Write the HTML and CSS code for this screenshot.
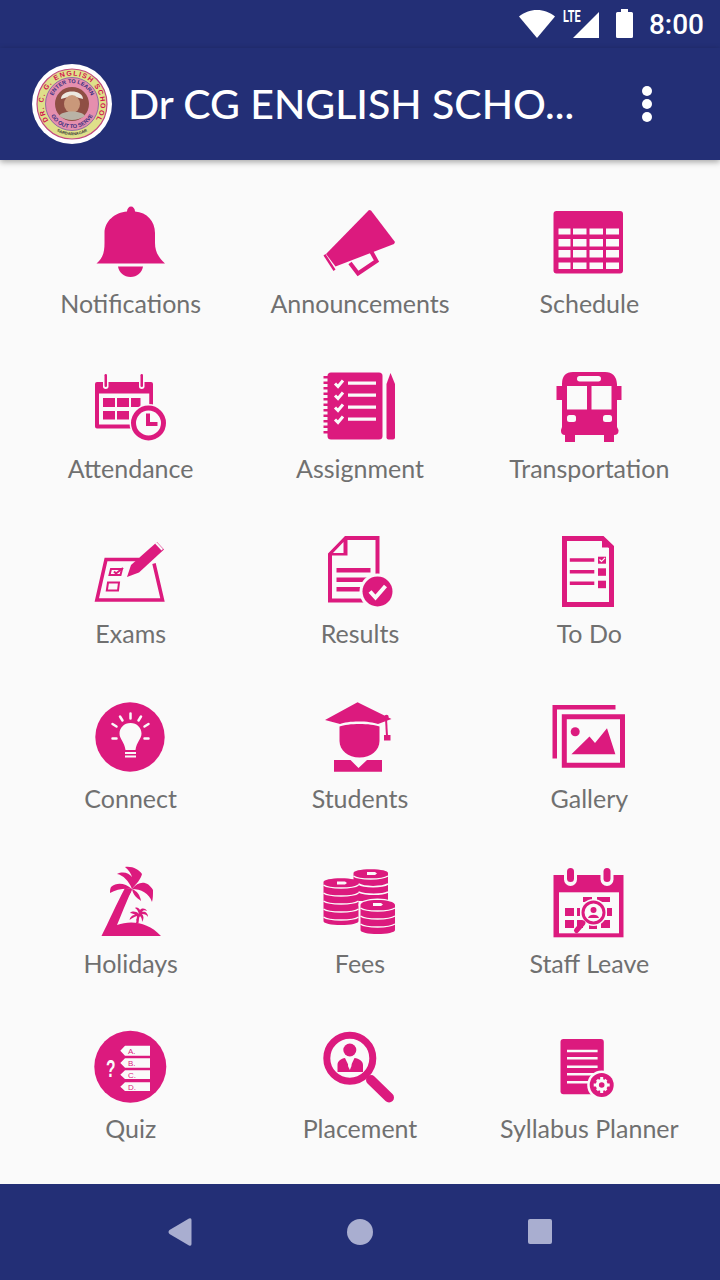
FILE: index.html
```html
<!DOCTYPE html>
<html>
	<head>
		<meta charset="UTF-8">
		<title>Dr CG ENGLISH SCHOOL</title>
		<link rel="stylesheet" href="styles.css">
	</head>
	<body>
		<div class="phone">

			<div class="status">
				<svg class="st-wifi" width="36" height="28" viewBox="0 0 36 28"><path d="M0 6.500C5 2.500 11 0 18 0S31 2.500 36 6.500L18 28Z"/></svg>
				<div class="st-net">
					<span class="st-lte">LTE</span>
					<svg width="26" height="26" viewBox="0 0 26 26"><path d="M26 0V26H0Z"/></svg>
				</div>
				<svg class="st-batt" width="17" height="29" viewBox="0 0 17 29"><path d="M5 0H12V3H15.500Q17 3 17 4.500V27.500Q17 29 15.500 29H1.500Q0 29 0 27.500V4.500Q0 3 1.500 3H5Z"/></svg>
				<span class="st-time">8:00</span>
			</div>

			<div class="toolbar">
				<svg class="logo" width="80" height="80" viewBox="0 0 80 80">
					<defs>
						<path id="arc-top" d="M15.300 54.300A28.500 28.500 0 1 1 64.700 54.300"/>
						<path id="arc-in" d="M20 44A20.500 20.500 0 1 1 60 44"/>
						<path id="arc-low" d="M17 47A24 24 0 0 0 63 47"/>
						<path id="arc-bot" d="M18 62A31 31 0 0 0 62 62"/>
					</defs>
					<circle cx="40" cy="40" r="40" fill="#fff"/>
					<circle cx="40" cy="40" r="35" fill="#dfe08a"/>
					<circle cx="40" cy="40" r="35" fill="none" stroke="#c2497f" stroke-width="1.200"/>
					<circle cx="40" cy="40" r="26.500" fill="#e58fae"/>
					<circle cx="40" cy="40" r="26.500" fill="none" stroke="#7a5aa0" stroke-width="0.800"/>
					<circle cx="40" cy="40" r="17" fill="#8f4f44"/>
					<path d="M29 35C29 25 51 25 51 35Q40 31 29 35Z" fill="#ece8e0"/>
					<ellipse cx="40" cy="40" rx="8" ry="9" fill="#c9987a"/>
					<path d="M27 52C30 46 50 46 53 52Q40 60 27 52Z" fill="#b9b3a6"/>
					<text class="logo-big"><textPath href="#arc-top" startOffset="50%" text-anchor="middle">DR. C. G. ENGLISH SCHOOL</textPath></text>
					<text class="logo-mid"><textPath href="#arc-in" startOffset="50%" text-anchor="middle">ENTER TO LEARN</textPath></text>
					<text class="logo-mid"><textPath href="#arc-low" startOffset="50%" text-anchor="middle">GO OUT TO SERVE</textPath></text>
					<text class="logo-sm"><textPath href="#arc-bot" startOffset="50%" text-anchor="middle">SARDARNAGAR</textPath></text>
				</svg>
				<h1 class="title">Dr CG ENGLISH SCHO...</h1>
				<div class="more"><i></i><i></i><i></i></div>
			</div>

			<div class="grid">

				<div class="item">
					<svg class="icon" viewBox="0 0 72 72">
						<path d="M1.500 58.500C8 53 9.500 47 9.500 38V28C9.500 16 20 7.500 32 6.500C32 3.500 34 1.500 36 1.500S40 3.500 40 6.500C52 7.500 60 16 60 28V38C60 47 64 53 70 58.500Z"/>
						<path d="M23 61.500H48C47 67.500 42 72 35.500 72S24 67.500 23 61.500Z"/>
					</svg>
					<p>Notifications</p>
				</div>
				<div class="item">
					<svg class="icon" viewBox="0 0 72 72">
						<path d="M45 5L47 5.500L71 37L70 39L11.500 61.500L2 49Z"/>
						<path d="M-0.500 50.500L1.500 49L11.500 64.500L9.500 66Z"/>
						<path class="line" d="M26 58L34 68.500L52.500 56L47.500 47"/>
					</svg>
					<p>Announcements</p>
				</div>
				<div class="item">
					<svg class="icon" viewBox="0 0 72 72">
						<rect x="0.500" y="6" width="69.500" height="62.500" rx="3"/>
						<path class="cut" d="M5.500 23.500H17.500V29.500H5.500ZM20 23.500H33.500V29.500H20ZM36.500 23.500H50V29.500H36.500ZM53 23.500H66V29.500H53ZM5.500 34H17.500V41.500H5.500ZM20 34H33.500V41.500H20ZM36.500 34H50V41.500H36.500ZM53 34H66V41.500H53ZM5.500 45H17.500V52.500H5.500ZM20 45H33.500V52.500H20ZM36.500 45H50V52.500H36.500ZM53 45H66V52.500H53ZM5.500 57.500H17.500V64H5.500ZM20 57.500H33.500V64H20ZM36.500 57.500H50V64H36.500ZM53 57.500H66V64H53Z"/>
					</svg>
					<p>Schedule</p>
				</div>

				<div class="item">
					<svg class="icon" viewBox="0 0 72 72">
						<path d="M2 12H56Q58 12 58 14V40H40V52H38V58.500H2Q0 58.500 0 56.500V14Q0 12 2 12Z"/>
						<path class="cut" d="M4 23.500H54.500V54.500H4Z"/>
						<path d="M54.500 23H58V40H54.500Z"/>
						<path d="M8 28H20V37H8ZM22 28H34V37H22ZM36 28H45.500V37H36ZM8 41H20V49.500H8ZM22 41H34V49.500H22Z"/>
						<rect class="cut" x="8" y="3" width="5.500" height="16" rx="2.700"/>
						<rect class="cut" x="44" y="3" width="5.500" height="16" rx="2.700"/>
						<rect x="9.500" y="4" width="2.500" height="13" rx="1.200"/>
						<rect x="45.500" y="4" width="2.500" height="13" rx="1.200"/>
						<circle class="cut" cx="53.500" cy="53" r="19"/>
						<circle class="line thick" cx="53.500" cy="53" r="15"/>
						<path class="line" d="M53 43.500V54H62.500"/>
					</svg>
					<p>Attendance</p>
				</div>
				<div class="item">
					<svg class="icon" viewBox="0 0 72 72">
						<rect x="3.500" y="2.500" width="55" height="67" rx="3.500"/>
						<path d="M-0.500 6H5V8.500H-0.500ZM-0.500 11.500H5V14H-0.500ZM-0.500 17H5V19.500H-0.500ZM-0.500 22.500H5V25H-0.500ZM-0.500 28H5V30.500H-0.500ZM-0.500 33.500H5V36H-0.500ZM-0.500 39H5V41.500H-0.500ZM-0.500 44.500H5V47H-0.500ZM-0.500 50H5V52.500H-0.500ZM-0.500 55.500H5V58H-0.500ZM-0.500 61H5V63.500H-0.500Z"/>
						<path class="tick" d="M11 13.500L14 16.500L19 10.500M11 25.500L14 28.500L19 22.500M11 37.500L14 40.500L19 34.500M11 49.500L14 52.500L19 46.500"/>
						<path class="cut" d="M24 11.500H52V14.800H24ZM24 23.500H52V26.800H24ZM24 35.500H52V38.800H24ZM24 47.500H52V50.800H24Z"/>
						<path d="M62.500 14L66.500 3L71 14V67.500Q71 69.500 69 69.500H64.500Q62.500 69.500 62.500 67.500Z"/>
					</svg>
					<p>Assignment</p>
				</div>
				<div class="item">
					<svg class="icon" viewBox="0 0 72 72">
						<path d="M20 2H52Q63 2 64 14V16H68.500V30H64V57L65.500 60V61Q65.500 65 61 65V72H51V65H22V72H12V65Q8 65 8 61V60L9 57V30H3.500V16H9V14Q9 2 20 2Z"/>
						<path class="cut" d="M14 16H34V39.500H14ZM38.500 16H58.500V39.500H38.500Z"/>
						<rect class="cut" x="24" y="6" width="24" height="5.500" rx="2.700"/>
						<rect class="cut" x="14" y="45" width="9" height="7" rx="2.500"/>
						<rect class="cut" x="50" y="45" width="9" height="7" rx="2.500"/>
					</svg>
					<p>Transportation</p>
				</div>

				<div class="item">
					<svg class="icon" viewBox="0 0 72 72">
						<path class="line thin" d="M44 24.500H11L1.800 65H67.500L59 28.500"/>
						<path d="M32 42L36 30L62 7L69 14.500L44 37.500Z"/>
						<path class="cut" d="M60 8.500L61.500 7L68 14L66.500 15.500Z"/>
						<path class="line hair" d="M16 34H27L25.500 40H14.500Z"/>
						<path class="line hair" d="M19 36.500L21 38.500L28 33"/>
						<path class="line hair" d="M13 47.500H24L23 55.500H11.800Z"/>
					</svg>
					<p>Exams</p>
				</div>
				<div class="item">
					<svg class="icon" viewBox="0 0 72 72">
						<path class="line" d="M21 3H53.500V60M43 65.500H6V20"/>
						<path d="M21 1H23.500V20.500H4V18.500ZM19.500 7L9 18H19.500Z"/>
						<path d="M12.500 33H46.500V37.500H12.500ZM12.500 42.500H46.500V47H12.500ZM12.500 52H42V56.500H12.500Z"/>
						<circle class="cut" cx="53.500" cy="56.500" r="18"/>
						<circle cx="53.500" cy="56.500" r="15"/>
						<path class="tick wide" d="M46 56.500L51.500 62.500L61.500 51"/>
					</svg>
					<p>Results</p>
				</div>
				<div class="item">
					<svg class="icon" viewBox="0 0 72 72">
						<path class="line thick" d="M11.500 3.500H49.500L58.500 12V69.500H11.500Z"/>
						<path d="M49 1L61 12.500H49Z"/>
						<path d="M16.800 23.300H41.300V26.700H16.800ZM16.800 35H41.300V38.400H16.800ZM16.800 46.600H41.300V50H16.800Z"/>
						<rect x="45" y="21.700" width="8" height="7"/>
						<rect x="45" y="33.300" width="8" height="7.500"/>
						<rect x="45" y="45.700" width="8" height="7.500"/>
						<path class="tick fine" d="M46.500 24.500L48.500 26.500L52 22.800"/>
					</svg>
					<p>To Do</p>
				</div>

				<div class="item">
					<svg class="icon" viewBox="0 0 72 72">
						<circle cx="35" cy="37" r="34.700"/>
						<path class="cut" d="M35.500 23C29 23 24.500 28 24.500 33.500C24.500 39 29.500 42 30.500 50H40.500C41.500 42 46.500 39 46.500 33.500C46.500 28 42 23 35.500 23Z"/>
						<path class="cut" d="M30 52H41V54H30ZM30 55.500H41V57.500H30Z"/>
						<path class="ray" d="M35.500 13.500V18.500M25 16.500L27.500 20.500M46 16.500L43.500 20.500M17.500 24L21.500 26.500M53.500 24L49.500 26.500M17.500 38.500H21.500M53.500 38.500H49.500"/>
					</svg>
					<p>Connect</p>
				</div>
				<div class="item">
					<svg class="icon" viewBox="0 0 72 72">
						<path d="M33.500 2.300L67.500 19L54 24C46 20.500 23 20.500 16 24L1 20Z"/>
						<path d="M15.500 26.500C24 23 47 23 55.500 26.500V41C55.500 50 47 57.500 35.500 57.500S15.500 50 15.500 41Z"/>
						<path d="M10 60H26.500L34.500 68L43 60H58V71.700H10Z"/>
						<path class="line hair" d="M62 19L63 36"/>
						<circle cx="62.500" cy="17" r="2.200"/>
						<rect x="60" y="35" width="6.500" height="5.500"/>
					</svg>
					<p>Students</p>
				</div>
				<div class="item">
					<svg class="icon" viewBox="0 0 72 72">
						<path d="M-0.500 5H62.500V9.500H4V58.500H-0.500Z"/>
						<path class="line thick" d="M11.300 16.800H69.500V65.200H11.300Z"/>
						<circle cx="22.200" cy="31.700" r="4.500"/>
						<path d="M18.400 54.300L36.500 36.500L42 43L54 28.300L62.400 54.300Z"/>
					</svg>
					<p>Gallery</p>
				</div>

				<div class="item">
					<svg class="icon" viewBox="0 0 72 72">
						<path d="M6.500 71C13 58 22 38 30 23L37 24C31 38 26 50 22 60C36 55 53 57 66 71Z"/>
						<path d="M37 24C42 18 46 14 47 9C44 5 38 1 30 2C34 5 36 9 37 12C34 8 28 6 22 9C28 10 34 16 37 24Z"/>
						<path d="M37 24C30 18 22 17 16 22C15 24 15 26 15 28C21 24 30 23 37 24Z"/>
						<path d="M37 24C44 15 53 16 58 25C58 30 58 33 57 37C54 28 46 24 37 24Z"/>
						<path d="M37 24C42 26 45 30 46 36C42 33 38 30 37 24Z"/>
						<path d="M37 24C33 26 30 29 29 34C33 32 36 29 37 24Z"/>
						<path d="M41 58L43 50H44.500L43.500 58Z"/>
						<path d="M44 49C41 46 37 46 35 48C37 48 39 49 40 50C37 50 35 52 34.500 55C37 53 39 52 42 51C42 53 41 55 41 56C43 54 44 53 45 51C47 53 47 55 47 57C49 54 49 51 47 49C50 49 52 50 53 52C53 48 50 46 47 47C48 45 50 45 52 46C50 43 47 43 45 45C44 43 42 42 40 43C42 44 43 46 44 49Z"/>
					</svg>
					<p>Holidays</p>
				</div>
				<div class="item">
					<svg class="icon" viewBox="0 0 72 72">
						<path d="M29.500 8C29.500 6 36 4.300 46.700 4.300S64 6 64 8V36H29.500Z"/>
						<path d="M-0.500 17C-0.500 15 7 13.300 17 13.300S34.500 15 34.500 17V56C34.500 58.500 27 60 17 60S-0.500 58.500 -0.500 56Z"/>
						<ellipse class="cut" cx="53.500" cy="40" rx="19" ry="6.500"/>
						<path d="M36.500 40C36.500 37 44 35 53.500 35S71 37 71 40V65C71 67.500 63 69 53.500 69S36.500 67.500 36.500 65Z"/>
						<path class="seam" d="M29.500 11C35 15 58 15 64 11M34.500 19C40 22.500 58 22.500 64 19M34.500 27C42 30 58 30 64 27M-0.500 20C5 24 29 24 34.500 20M-0.500 28C5 32 29 32 34.500 28M-0.500 36C5 40 29 40 34.500 36M-0.500 44C5 48 29 48 34.500 44M-0.500 52C5 56 29 56 34.500 52M36.500 43C42 47 65 47 71 43M36.500 51C42 55 65 55 71 51M36.500 59C42 63 65 63 71 59"/>
						<path class="cut" d="M13 16.500H21L23 18L21 19.500H13ZM43 7H51L53 8.500L51 10H43ZM49 38H57L59 39.500L57 41H49Z"/>
					</svg>
					<p>Fees</p>
				</div>
				<div class="item">
					<svg class="icon" viewBox="0 0 72 72">
						<rect x="0.500" y="10" width="70" height="62.300"/>
						<rect class="cut" x="6" y="27.300" width="60" height="41"/>
						<rect class="cut" x="11" y="1" width="13" height="20" rx="6.500"/>
						<rect class="cut" x="47.500" y="1" width="13" height="20" rx="6.500"/>
						<rect x="14" y="3" width="7" height="14" rx="3.500"/>
						<rect x="50.500" y="3" width="7" height="14" rx="3.500"/>
						<path d="M12 43H21V51H12ZM12 55H21V63H12ZM24 43H27V51H24ZM24 55H30V63H24ZM30 32H39V37H30ZM44 32H57V37H44ZM54 43H59V51H54ZM48 55H57V63H48ZM36 60H44V64H36Z"/>
						<circle class="cut" cx="40.500" cy="47.500" r="13.500"/>
						<circle class="line" cx="40.500" cy="47.500" r="10.500" style="stroke-width:3"/>
						<circle cx="40.500" cy="45" r="3"/>
						<path d="M35 53C35.500 48.500 45.500 48.500 46 53Z"/>
						<path class="cap slim" d="M30 58L23.500 65.500"/>
					</svg>
					<p>Staff Leave</p>
				</div>

				<div class="item">
					<svg class="icon" viewBox="0 0 72 72">
						<circle cx="35.300" cy="36.800" r="36"/>
						<path class="cut" d="M30 15.700H55V25.700H30L25.300 20.700ZM30 28.300H55V37.700H30L25.300 33ZM30 40.300H55V49H30L25.300 44.700ZM30 52.300H55V61H30L25.300 56.700Z"/>
						<text class="q-mark" x="11" y="47" textLength="9.500" lengthAdjust="spacingAndGlyphs">?</text>
						<text class="q-opt" x="33" y="24">A.</text>
						<text class="q-opt" x="33" y="36">B.</text>
						<text class="q-opt" x="33" y="48">C.</text>
						<text class="q-opt" x="33" y="60">D.</text>
					</svg>
					<p>Quiz</p>
				</div>
				<div class="item">
					<svg class="icon" viewBox="0 0 72 72">
						<circle class="line ring" cx="25.800" cy="28.300" r="23"/>
						<path class="cap" d="M47 50L65 67.500"/>
						<circle cx="25.800" cy="20" r="6.500"/>
						<path d="M13.500 42V35C13.500 31 17 28.500 21 28L25.800 38L30.500 28C35 28.500 39 31 39 35V42Z"/>
						<path class="cut" d="M24.800 28H26.800L27.500 36L25.800 40L24 36Z"/>
					</svg>
					<p>Placement</p>
				</div>
				<div class="item">
					<svg class="icon" viewBox="0 0 72 72">
						<rect x="7.500" y="9" width="43.300" height="55.300" rx="3"/>
						<path class="cut" d="M14 19.800H44.600V22.200H14ZM14 27.100H44.600V29.500H14ZM14 35.500H44.600V37.900H14ZM14 43.100H44.600V45.500H14ZM14 51.100H36V53.500H14Z"/>
						<circle class="cut" cx="48.700" cy="55" r="14.500"/>
						<circle cx="48.700" cy="55" r="12"/>
						<circle class="cut" cx="48.700" cy="55" r="6"/>
						<path class="cut" d="M47.200 47H50.200V63H47.200ZM40.700 53.500H56.700V56.500H40.700ZM43 50.800L45 48.800L54.400 59.200L52.400 61.200ZM52.400 48.800L54.400 50.800L45 61.200L43 59.200Z"/>
						<circle cx="48.700" cy="55" r="2.800"/>
					</svg>
					<p>Syllabus Planner</p>
				</div>

			</div>

			<div class="navbar">
				<svg width="24" height="28" viewBox="0 0 24 28"><path d="M21 0.500Q23.500 -0.500 23.500 2V26Q23.500 28.500 21 27.500L1.500 16Q-0.500 14 1.500 12Z"/></svg>
				<svg width="26" height="26" viewBox="0 0 26 26"><circle cx="13" cy="13" r="13"/></svg>
				<svg width="24" height="25" viewBox="0 0 24 25"><rect width="24" height="25" rx="2"/></svg>
			</div>

		</div>
	</body>
</html>
```

FILE: styles.css
```css
*{
	box-sizing: border-box;
}
body{
	margin: 0;
	background-color: #fafafa;
	font-family: "Lato", "Noto Sans", sans-serif;
}
.phone{
	width: 720px;
	height: 1280px;
	display: flex;
	flex-direction: column;
	overflow: hidden;
}

/* status bar */
.status{
	height: 48px;
	background-color: #232f76;
	display: flex;
	align-items: flex-start;
	justify-content: flex-end;
	padding-right: 16px;
	fill: #fff;
	color: #fff;
}
.st-wifi{
	margin-top: 10px;
	margin-right: 8px;
}
.st-net{
	width: 36px;
	height: 38px;
	display: flex;
	align-items: flex-end;
	justify-content: flex-end;
	position: relative;
}
.st-lte{
	position: absolute;
	left: 0;
	top: 9px;
	font-family: "Roboto", sans-serif;
	font-size: 16px;
	font-weight: 700;
	line-height: 16px;
	transform: scaleX(0.68);
	transform-origin: left top;
}
.st-batt{
	margin-top: 9px;
	margin-left: 17px;
}
.st-time{
	margin-top: 8px;
	margin-left: 16px;
	font-family: "Roboto", sans-serif;
	font-size: 28px;
	font-weight: 500;
	line-height: 34px;
}

/* toolbar */
.toolbar{
	height: 112px;
	background-color: #232f76;
	display: flex;
	align-items: center;
	padding-left: 32px;
	box-shadow: 0 2px 6px rgba(0,0,0,0.35);
	position: relative;
}
.logo{
	flex: none;
}
.logo text{
	font-family: "Liberation Sans", sans-serif;
	font-weight: 700;
}
.logo-big{
	font-size: 7px;
	fill: #d3124f;
	letter-spacing: 1.2px;
}
.logo-mid{
	font-size: 5.500px;
	fill: #3a2f80;
}
.logo-sm{
	font-size: 4px;
	fill: #333;
}
.title{
	width: 514px;
	margin: 0 0 0 16px;
	color: #fff;
	font-size: 41px;
	font-weight: 500;
	line-height: 48px;
	white-space: nowrap;
}
.more{
	width: 10px;
	display: flex;
	flex-direction: column;
	gap: 3px;
}
.more i{
	width: 10px;
	height: 10px;
	border-radius: 50%;
	background-color: #fff;
}

/* menu */
.grid{
	flex: 1;
	display: grid;
	grid-template-columns: repeat(3,1fr);
	grid-auto-rows: 115px;
	row-gap: 50px;
	padding: 45px 16px 0;
	background-color: #fafafa;
}
.item{
	display: flex;
	flex-direction: column;
	align-items: center;
}
.item p{
	margin: 10px 0 0;
	color: #707070;
	font-size: 25px;
	line-height: 32px;
	white-space: nowrap;
}
.icon{
	width: 72px;
	height: 72px;
	flex: none;
	overflow: visible;
	fill: #dc1a7e;
}
.icon .cut{
	fill: #fafafa;
}
.icon .line{
	fill: none;
	stroke: #dc1a7e;
	stroke-width: 4;
}
.icon .line.thick{
	stroke-width: 5;
}
.icon .line.thin{
	stroke-width: 3.5;
}
.icon .line.hair{
	stroke-width: 2;
}
.icon .line.ring{
	stroke-width: 7;
}
.icon .tick{
	fill: none;
	stroke: #fafafa;
	stroke-width: 3;
}
.icon .tick.wide{
	stroke-width: 4;
}
.icon .tick.fine{
	stroke-width: 1.2;
}
.icon .ray{
	fill: none;
	stroke: #fafafa;
	stroke-width: 2.500;
	stroke-linecap: round;
}
.icon .seam{
	fill: none;
	stroke: #fafafa;
	stroke-width: 1.500;
}
.icon .cap{
	fill: none;
	stroke: #dc1a7e;
	stroke-width: 10;
	stroke-linecap: round;
}
.icon .cap.slim{
	stroke-width: 5;
}
.q-mark{
	fill: #fafafa;
	font-family: "Liberation Sans", sans-serif;
	font-size: 23px;
	font-weight: 700;
}
.q-opt{
	font-family: "Liberation Sans", sans-serif;
	font-size: 8px;
}

/* nav bar */
.navbar{
	height: 96px;
	flex: none;
	background-color: #232f76;
	display: flex;
	align-items: center;
	justify-content: center;
	gap: 155px;
	padding-bottom: 1px;
	fill: #a9aed0;
}
```
